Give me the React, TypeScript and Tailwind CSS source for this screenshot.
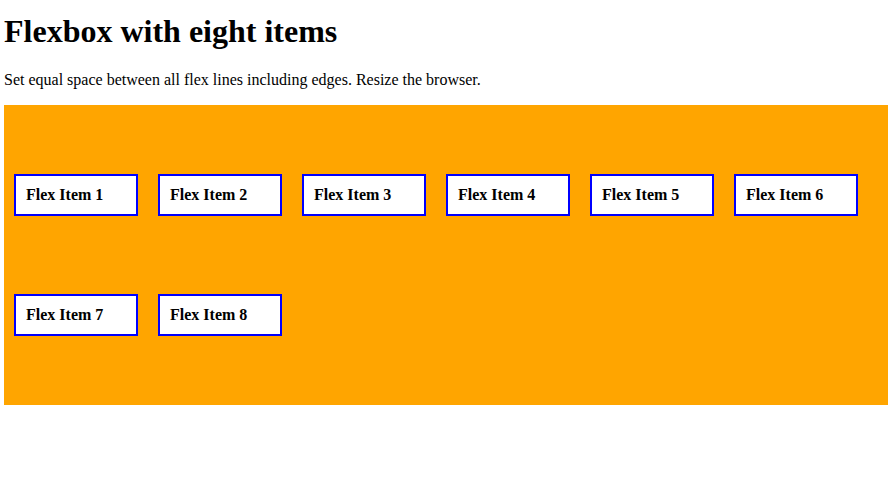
import React from "react";

export default function App() {
  const items = [1, 2, 3, 4, 5, 6, 7, 8];
  return (
    <div className="px-[4px] bg-white text-black" style={{ fontFamily: '"Liberation Serif", "Times New Roman", serif' }}>
      <h1 className="pt-[13px] mb-[21px] text-[32px] font-bold leading-[normal]">Flexbox with eight items</h1>
      <p className="text-[16px] leading-[normal] mb-[16px]">
        Set equal space between all flex lines including edges. Resize the browser.
      </p>
      <div className="flex flex-wrap content-evenly h-[300px] bg-[#ffa500]">
        {items.map((n) => (
          <div
            key={n}
            className="m-[10px] w-[124px] border-2 border-[#0000ff] bg-white p-[10px] text-[16px] font-bold leading-[normal]"
          >
            Flex Item {n}
          </div>
        ))}
      </div>
    </div>
  );
}
